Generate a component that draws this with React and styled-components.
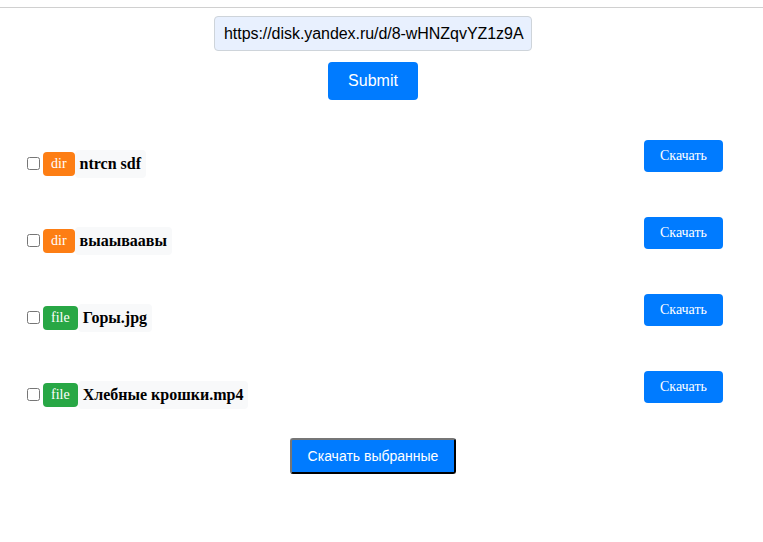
import styled, { createGlobalStyle } from 'styled-components'

const GlobalStyle = createGlobalStyle`
    body {
        margin: 0;
        background: #fff;
        font-family: "Liberation Serif", "Times New Roman", serif;
    }
`

const TopLine = styled.div`
    margin-top: 7px;
    height: 1px;
    background: #d0d0d0;
`

const Page = styled.div`
    width: calc(100% - 17px);
    box-sizing: border-box;
    padding: 0 23px;
`

const Form = styled.form`
    display: flex;
    flex-direction: column;
    align-items: center;
    gap: 11px;
    padding-top: 8px;
`

const UrlInput = styled.input`
    width: 318px;
    height: 35px;
    box-sizing: border-box;
    padding: 0 1px 0 9px;
    border: 1px solid #ced4da;
    border-radius: 4px;
    background: #e8f0fe;
    color: #000;
    font-family: "Liberation Sans", Arial, sans-serif;
    font-size: 16px;
    letter-spacing: -0.05px;
    outline: none;
`

const SubmitButton = styled.button`
    width: 90px;
    height: 38px;
    border: none;
    border-radius: 4px;
    background: #007bff;
    color: #fff;
    font-family: "Liberation Sans", Arial, sans-serif;
    font-size: 16px;
    cursor: pointer;
`

const List = styled.ul`
    list-style: none;
    margin: 40px 0 0;
    padding: 0;
    display: flex;
    flex-direction: column;
    gap: 40px;
`

const Row = styled.li`
    display: flex;
    justify-content: space-between;
    align-items: flex-start;
    height: 37px;
`

const Item = styled.label`
    display: flex;
    align-items: center;
    margin-top: 10px;
`

const Check = styled.input`
    width: 13px;
    height: 13px;
    margin: 0 3px 1px 4px;
`

const Badge = styled.span`
    display: inline-block;
    padding: 4px 8px;
    border-radius: 4px;
    background: ${p => (p.$type === 'dir' ? '#fd7e14' : '#28a745')};
    color: #fff;
    font-size: 14px;
    line-height: 16px;
`

const Name = styled.span`
    display: inline-block;
    padding: 5px 5px;
    border-radius: 4px;
    background: #f8f9fa;
    color: #000;
    font-weight: bold;
    font-size: 16px;
    line-height: 18px;
`

const DownloadButton = styled.button`
    width: 79px;
    height: 32px;
    border: none;
    border-radius: 4px;
    background: #007bff;
    color: #fff;
    font-family: "Liberation Serif", "Times New Roman", serif;
    font-size: 14px;
    cursor: pointer;
`

const Footer = styled.div`
    display: flex;
    justify-content: center;
    margin-top: 30px;
`

const BulkButton = styled.button`
    width: 166px;
    height: 36px;
    border: 2px solid;
    border-color: #767676 #000 #000 #767676;
    border-radius: 3px;
    background: #007bff;
    color: #fff;
    font-family: "Liberation Sans", Arial, sans-serif;
    font-size: 14px;
    cursor: pointer;
`

const items = [
    { type: 'dir', name: 'ntrcn sdf' },
    { type: 'dir', name: 'выаываавы' },
    { type: 'file', name: 'Горы.jpg' },
    { type: 'file', name: 'Хлебные крошки.mp4' },
]

export default function App() {
    return (
        <>
            <GlobalStyle />
            <TopLine />
            <Page>
                <Form onSubmit={e => e.preventDefault()}>
                    <UrlInput defaultValue='https://disk.yandex.ru/d/8-wHNZqvYZ1z9A' />
                    <SubmitButton type='submit'>Submit</SubmitButton>
                </Form>
                <List>
                    {items.map((item, index) => (
                        <Row key={index}>
                            <Item>
                                <Check type='checkbox' />
                                <Badge $type={item.type}>{item.type}</Badge>
                                <Name>{item.name}</Name>
                            </Item>
                            <DownloadButton>Скачать</DownloadButton>
                        </Row>
                    ))}
                </List>
                <Footer>
                    <BulkButton>Скачать выбранные</BulkButton>
                </Footer>
            </Page>
        </>
    )
}
